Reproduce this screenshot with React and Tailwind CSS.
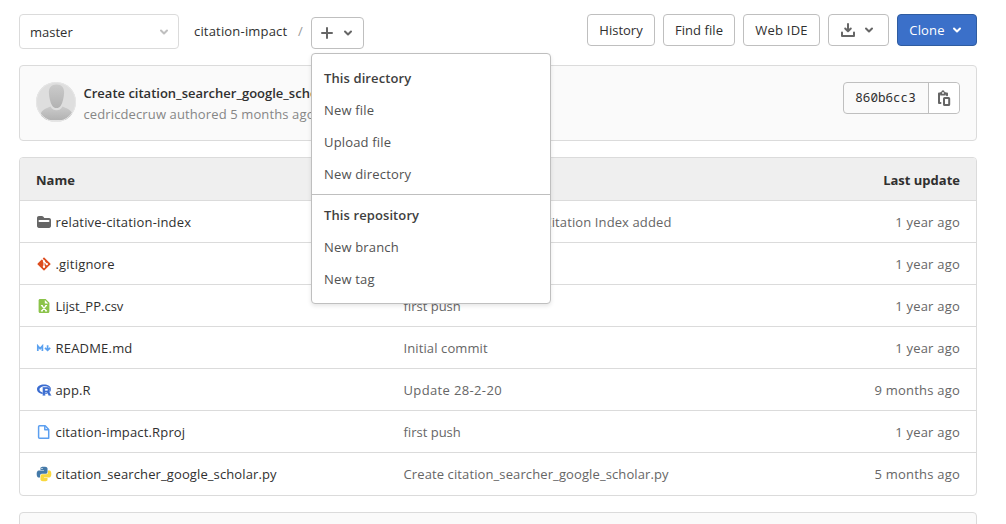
import React from 'react';

const Chevron = ({ className = '' }) => (
  <svg viewBox="0 0 10 8" className={`h-2 w-2.5 shrink-0 ${className}`} fill="none" stroke="currentColor" strokeWidth="2" strokeLinecap="round" strokeLinejoin="round">
    <path d="M2 2.5 5 5.5 8 2.5" />
  </svg>
);

const icon = 'h-4 w-4 shrink-0';

const FolderIcon = () => (
  <svg viewBox="0 0 16 16" className={icon}>
    <path fill="#666" fillRule="evenodd" d="M1 3.9C1 2.9 1.8 2 2.9 2h3c.5 0 1 .2 1.300.6L8.300 4h4.800C14.200 4 15 4.900 15 5.900v6.200c0 1-.8 1.900-1.900 1.900H2.900C1.800 14 1 13.100 1 12.100zM3.500 6a.7.7 0 0 0 0 2h9a1 1 0 0 0 0-2z" />
  </svg>
);

const GitIcon = () => (
  <svg viewBox="0 0 16 16" className={icon}>
    <rect x="3.2" y="3.2" width="9.6" height="9.6" rx="0.7" fill="#dd4c1e" transform="rotate(45 8 8)" />
    <path d="M5.400 1.900 8 5v6M8.200 5.500l2.600 2.600" stroke="#fff" strokeWidth="1.100" fill="none" />
    <circle cx="8" cy="5.300" r="1.150" fill="#fff" />
    <circle cx="8" cy="10.800" r="1.200" fill="#fff" />
    <circle cx="10.800" cy="8.100" r="1.200" fill="#fff" />
  </svg>
);

const SheetIcon = () => (
  <svg viewBox="0 0 16 16" className={icon}>
    <path fill="#8bc34a" d="M4 1h5.600L13.400 4.800v8.700c0 .8-.6 1.500-1.400 1.500H4c-.8 0-1.400-.7-1.400-1.500v-11C2.600 1.700 3.200 1 4 1z" />
    <path fill="#fff" d="M8.800 2.100v3.500h3.500z" />
    <path d="M5.700 7.500l4.600 5.400M10.300 7.500l-4.600 5.400M4.900 7.500h2M9.100 7.500h2M4.900 12.900h2M9.100 12.900h2" stroke="#fff" strokeWidth="1.200" />
  </svg>
);

const MarkdownIcon = () => (
  <svg viewBox="0 0 16 16" className={icon} fill="none" stroke="#5ba1ef" strokeWidth="1.700">
    <path d="M1.800 10.900V6l2.300 2.600L6.400 6v4.900" />
    <path d="M11.600 5.200v4.500M9 7.800l2.600 2.500L14.200 7.800" />
  </svg>
);

const RIcon = () => (
  <svg viewBox="0 0 16 16" className={icon}>
    <path fill="#3a6cd0" fillRule="evenodd" d="M8 2.500c3.900 0 7 2 7 4.800 0 2.700-3.100 4.900-7 4.900s-7-2.200-7-4.900C1 4.500 4.100 2.500 8 2.500zM8.900 4.200C5.900 4.200 3.500 5.600 3.500 7.500s2.400 3.300 5.400 3.300 5.100-1.300 5.100-3.300-2.100-3.300-5.100-3.300z" />
    <path fill="#3a6cd0" stroke="#fff" strokeWidth=".3" fillRule="evenodd" d="M6.600 5.100h5c1.700 0 2.600 1 2.600 2.300 0 1-.5 1.800-1.300 2.100.4.200.7.500.9.900l1.700 3.300h-2.900l-1.300-2.700c-.2-.4-.4-.5-.8-.5H9.300v3.200H6.600zM9.200 7.100v1.500h1.700c.6 0 .9-.3.9-.8S11.500 7.100 10.900 7.100z" />
  </svg>
);

const DocIcon = () => (
  <svg viewBox="0 0 16 16" className={icon} fill="none" stroke="#5c9ff0" strokeWidth="1.500" strokeLinejoin="round">
    <path d="M3.600 1.800h5.600l3.500 3.600v8.800H3.600c-.6 0-1-.4-1-1V2.800c0-.6.4-1 1-1z" />
    <path d="M8.800 2v3.800h3.800" />
  </svg>
);

const PythonIcon = () => (
  <svg viewBox="-1.200 -1.200 26.400 26.400" className={icon}>
    <path fill="#4479a8" d="M14.250.18l.9.2.73.26.59.3.45.32.34.34.25.34.16.33.1.3.04.26.02.2-.01.13V8.500l-.05.63-.13.55-.21.46-.26.38-.3.31-.33.25-.35.19-.35.14-.33.1-.3.07-.26.04-.21.02H8.770l-.69.05-.59.14-.5.22-.41.27-.33.32-.27.35-.2.36-.15.37-.1.35-.07.32-.04.27-.02.21v3.060H3.170l-.21-.03-.28-.07-.32-.12-.35-.18-.36-.26-.36-.36-.35-.46-.32-.59-.28-.73-.21-.88-.14-1.050-.05-1.230.06-1.220.16-1.040.24-.87.32-.71.36-.57.4-.44.42-.33.42-.24.4-.16.36-.1.32-.05.24-.01h.16l.06.01h8.160v-.83H6.180l-.01-2.750-.02-.37.05-.34.11-.31.17-.28.25-.26.31-.23.38-.2.44-.18.51-.15.58-.12.64-.1.71-.06.77-.04.84-.02 1.270.05zm-6.300 1.980l-.23.33-.08.41.08.41.23.34.33.22.41.09.41-.09.33-.22.23-.34.08-.41-.08-.41-.23-.33-.33-.22-.41-.09-.41.09z" />
    <path fill="#f9d83d" d="M21.040 6.110l.28.06.32.12.35.18.36.27.36.35.35.47.32.59.28.73.21.88.14 1.040.05 1.230-.06 1.230-.16 1.040-.24.86-.32.71-.36.57-.4.45-.42.33-.42.24-.4.16-.36.09-.32.05-.24.02-.16-.01h-8.220v.82h5.840l.01 2.760.02.36-.05.34-.11.31-.17.29-.25.25-.31.24-.38.2-.44.17-.51.15-.58.13-.64.09-.71.07-.77.04-.84.01-1.270-.04-1.070-.14-.9-.2-.73-.25-.59-.3-.45-.33-.34-.34-.25-.34-.16-.33-.1-.3-.04-.25-.02-.2.01-.13v-5.340l.05-.64.13-.54.21-.46.26-.38.3-.32.33-.24.35-.2.35-.14.33-.1.3-.06.26-.04.21-.02.13-.01h5.840l.69-.05.59-.14.5-.21.41-.28.33-.32.27-.35.2-.36.15-.36.1-.35.07-.32.04-.28.02-.21V6.070h2.090z" />
  </svg>
);

const Avatar = () => (
  <svg viewBox="0 0 40 40" className="h-10 w-10 shrink-0">
    <defs>
      <clipPath id="avatar-round"><circle cx="20" cy="20" r="20" /></clipPath>
      <linearGradient id="avatar-fill" x1="0" y1="0" x2="0" y2="1">
        <stop offset="0" stopColor="#cbcbcb" />
        <stop offset="1" stopColor="#b2b2b2" />
      </linearGradient>
    </defs>
    <g clipPath="url(#avatar-round)">
      <rect width="40" height="40" fill="#dedede" />
      <path fill="url(#avatar-fill)" d="M20.500 2.500c5 0 8 3.300 7.600 8.500-.3 4.500-1.300 9.500-3.200 12.500-1.200 2-2.700 2.500-4.400 2.500s-3.200-.5-4.400-2.500c-1.900-3-2.900-8-3.200-12.500-.4-5.200 2.600-8.500 7.600-8.500z" />
      <path fill="url(#avatar-fill)" d="M5 38v-7c1.500-3.500 6-5 9.500-6.500 1.500 2.700 3.500 3.800 6 3.800s4.500-1.100 6-3.800c3.500 1.500 8 3 9.500 6.500v7z" />
      <path fill="#e4e4e4" d="M0 38.200h40V40H0z" />
    </g>
    <circle cx="20" cy="20" r="19.500" fill="none" stroke="#e6e6e6" />
  </svg>
);

const DownloadIcon = () => (
  <svg viewBox="0 0 16 16" className={icon} fill="none" stroke="#666" strokeWidth="2" strokeLinecap="round" strokeLinejoin="round">
    <path d="M8 2v7M5.200 6.500 8 9.300l2.800-2.800M2 10.500V14h12v-3.500" />
  </svg>
);

const CopyIcon = () => (
  <svg viewBox="0 0 16 16" className={icon}>
    <path fill="none" stroke="#666" strokeWidth="2" strokeLinecap="round" strokeLinejoin="round" d="M4.500 13H3V3.500h8v1.800" />
    <path fill="#666" d="M4.200 5.500V2.300h1C5.500 1 6.100.3 7 .3s1.500.7 1.700 2h1v3.200z" />
    <circle cx="7" cy="3" r=".9" fill="#fff" />
    <rect x="8" y="8" width="5.200" height="7" rx=".6" fill="#fff" stroke="#666" strokeWidth="2" />
  </svg>
);

const files = [
  { Icon: FolderIcon, name: 'relative-citation-index', message: 'Relative Citation Index added', update: '1 year ago', nameStyle: 'tracking-[0.18px]', messageStyle: 'pl-[88px]' },
  { Icon: GitIcon, name: '.gitignore', message: '', update: '1 year ago', nameStyle: 'tracking-[0.2px]' },
  { Icon: SheetIcon, name: 'Lijst_PP.csv', message: 'first push', update: '1 year ago', nameStyle: 'tracking-[0px]', messageStyle: 'tracking-[0px]' },
  { Icon: MarkdownIcon, name: 'README.md', message: 'Initial commit', update: '1 year ago', nameStyle: 'tracking-[0.2px]' },
  { Icon: RIcon, name: 'app.R', message: 'Update 28-2-20', update: '9 months ago', messageStyle: 'tracking-[0.36px]' },
  { Icon: DocIcon, name: 'citation-impact.Rproj', message: 'first push', update: '1 year ago', nameStyle: 'tracking-[0.16px]', messageStyle: 'tracking-[0px]' },
  { Icon: PythonIcon, name: 'citation_searcher_google_scholar.py', message: 'Create citation_searcher_google_scholar.py', update: '5 months ago' },
];

const button = 'flex h-8 items-center justify-center whitespace-nowrap rounded border border-[#bfbfbf] bg-white';

const MenuItem = ({ children }) => <li className="flex h-8 items-center px-3 tracking-[0.17px] text-[#525252]">{children}</li>;
const MenuTitle = ({ children }) => <li className="flex h-8 items-center px-3 font-semibold text-[#404040]">{children}</li>;

function NewMenu() {
  return (
    <div className="relative">
      <button className={`${button} w-[53px] gap-2.5 pr-0.5 text-[#666]`}>
        <svg viewBox="0 0 12 12" className="h-3 w-3" stroke="currentColor" strokeWidth="2" strokeLinecap="round"><path d="M6 1v10M1 6h10" /></svg>
        <Chevron />
      </button>
      <div className="absolute left-0 top-9 z-10 w-60 rounded border border-[#bfbfbf] bg-white tracking-[0.1px] shadow-[0_2px_4px_rgba(0,0,0,0.1)]">
        <ul className="pt-2">
          <MenuTitle>This directory</MenuTitle>
          <MenuItem>New file</MenuItem>
          <MenuItem>Upload file</MenuItem>
          <MenuItem>New directory</MenuItem>
        </ul>
        <ul className="mt-1 border-t border-[#bfbfbf] pb-2 pt-1">
          <MenuTitle>This repository</MenuTitle>
          <MenuItem>New branch</MenuItem>
          <MenuItem>New tag</MenuItem>
        </ul>
      </div>
    </div>
  );
}

export default function App() {
  return (
    <div className="h-[524px] overflow-hidden bg-white pl-[19px] pr-[29px] pt-3.5 font-['Open_Sans','Noto_Sans',sans-serif] text-[13px] leading-5 text-[#303030]">
      <header className="flex h-[35px] items-start">
        <button className="flex h-[35px] w-40 items-center justify-between rounded border border-[#dbdbdb] pl-2.5 pr-[9px]">
          <span>master</span>
          <Chevron className="text-[#bfbfbf]" />
        </button>
        <nav className="flex">
          <span className="ml-[15px] mt-[7px] w-[104px] whitespace-nowrap tracking-[0.18px]">citation-impact</span>
          <span className="mt-[7px] w-[13px] text-[#999]">/</span>
          <div className="mt-[3px]"><NewMenu /></div>
        </nav>
        <div className="ml-auto flex gap-2">
          <button className={`${button} w-[68px]`}>History</button>
          <button className={`${button} w-[72px] tracking-[0.05px]`}>Find file</button>
          <button className={`${button} w-[77px] tracking-[0.25px]`}>Web IDE</button>
          <button className={`${button} w-[61px] gap-2 pr-[3px] text-[#666]`}><DownloadIcon /><Chevron /></button>
          <button className="flex h-8 w-20 items-center justify-center gap-[7px] rounded border border-[#2f5ca0] bg-[#3b70c9] pr-[3px] tracking-[0.15px] text-white">Clone<Chevron /></button>
        </div>
      </header>

      <section className="mt-4 flex h-[76px] items-start rounded border border-[#dbdbdb] bg-[#fafafa] p-4">
        <Avatar />
        <div className="ml-[7.500px] mt-px">
          <p className="h-[21px] whitespace-nowrap font-semibold">Create citation_searcher_google_scholar.py</p>
          <p className="whitespace-nowrap tracking-[0.12px] text-[#868686]">cedricdecruw authored 5 months ago</p>
        </div>
        <div className="ml-auto flex h-8 w-[117px] rounded border border-[#bfbfbf]">
          <span className="flex flex-1 items-center justify-center pr-px font-['Noto_Sans_Mono','DejaVu_Sans_Mono',monospace] text-[12.600px]">860b6cc3</span>
          <button className="flex w-[31px] items-center justify-center rounded-r border-l border-[#bfbfbf] bg-white"><CopyIcon /></button>
        </div>
      </section>

      <section className="mt-4 overflow-hidden rounded border border-[#dbdbdb]">
        <div className="flex h-[43px] items-center justify-between border-b border-[#dbdbdb] bg-[#efefef] px-4 pt-0.5 font-bold">
          <span>Name</span>
          <span>Last update</span>
        </div>
        {files.map(({ Icon, name, message, update, nameStyle = '', messageStyle = '' }) => (
          <div key={name} className="flex h-[42px] items-center border-b border-[#dbdbdb] pl-4 pr-4 tracking-[0.11px] last:border-b-0">
            <span className={`flex w-[367.500px] items-center gap-[3.500px] ${nameStyle}`}><Icon />{name}</span>
            <span className={`flex-1 whitespace-nowrap text-[#666] ${messageStyle}`}>{message}</span>
            <span className="tracking-[0.22px] text-[#666]">{update}</span>
          </div>
        ))}
      </section>

      <section className="mt-4 h-20 rounded border border-[#dbdbdb] bg-[#fafafa]" />
    </div>
  );
}
